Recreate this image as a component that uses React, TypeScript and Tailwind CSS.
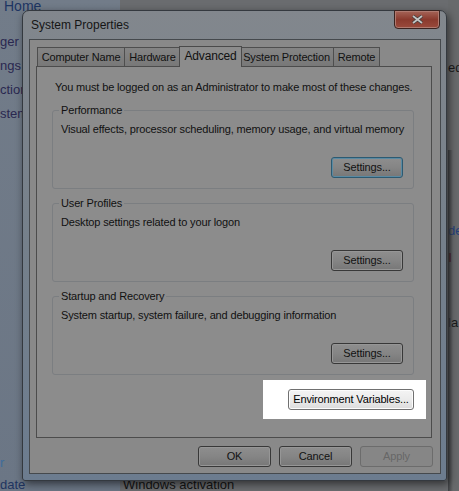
const tabs = [
  { label: "Computer Name", w: "w-[88px]" },
  { label: "Hardware", w: "w-[57px]" },
  { label: "Advanced", w: "w-[63px]", active: true },
  { label: "System Protection", w: "w-[95px]" },
  { label: "Remote", w: "w-[47px]" },
];

const groups = [
  {
    title: "Performance",
    text: "Visual effects, processor scheduling, memory usage, and virtual memory",
    focused: true,
  },
  { title: "User Profiles", text: "Desktop settings related to your logon" },
  {
    title: "Startup and Recovery",
    text: "System startup, system failure, and debugging information",
  },
];

function DimButton({
  children,
  w = "w-[72px]",
  focused = false,
  disabled = false,
}: {
  children: React.ReactNode;
  w?: string;
  focused?: boolean;
  disabled?: boolean;
}) {
  if (disabled) {
    return (
      <div
        className={`${w} flex h-[21px] items-center justify-center rounded-[3px] border border-[#6c6c6c] bg-[#868686] text-[#676767]`}
      >
        {children}
      </div>
    );
  }
  return (
    <div
      className={`${w} flex h-[21px] items-center justify-center rounded-[3px] border bg-gradient-to-b from-[#8e8e8e] via-[#858585] to-[#777777] text-[#121212] ${
        focused
          ? "border-[#2c5a72] shadow-[inset_0_0_0_1px_#5a8aa2]"
          : "border-[#383838] shadow-[inset_0_0_0_1px_#969696]"
      }`}
    >
      {children}
    </div>
  );
}

export default function App() {
  return (
    <div className="relative h-[491px] w-[459px] overflow-hidden whitespace-nowrap bg-[#6b6d70] font-['Liberation_Sans',Arial,sans-serif] text-[11px] leading-[15px] tracking-[-0.15px]">
      {/* control panel behind the dialog */}
      <div className="flex h-full">
        <aside className="flex w-[120px] flex-col bg-gradient-to-b from-[#727c89] to-[#6b7685] tracking-normal">
          <div className="-mt-[2px] pl-[4px] text-[14px] leading-[17px] text-[#1d3563]">Home</div>
          <div className="mt-[19px] flex flex-col gap-[9px] text-[13px] text-[#2a2850]">
            <span>ger</span>
            <span>ngs</span>
            <span>ction</span>
            <span>stem</span>
          </div>
          <div className="mt-auto flex flex-col gap-[7px] text-[13px]">
            <span className="text-[#3d6c9c]">r</span>
            <span className="-mb-[1px] text-[#1f3460]">date</span>
          </div>
        </aside>
        <main className="flex flex-1 flex-col bg-[#6a6c6f] tracking-normal">
          <div className="-mb-[1px] mt-auto pl-[3px] text-[13px] text-[#141414]">Windows activation</div>
        </main>
      </div>
      <div className="absolute left-[448px] top-0 flex h-full w-[11px] flex-col bg-[#686a6c] text-[13px] tracking-normal">
        <div className="absolute left-0 top-[150px] h-full w-[5px] bg-gradient-to-r from-[#3f4144] to-transparent" />
        <span className="mt-[60px] text-[#1a1a1a]">ed</span>
        <span className="mt-[148px] text-[#23407a]">de</span>
        <span className="mt-[12px] font-bold text-[#5a1010]">I</span>
        <span className="mt-[50px] text-[#1a1a1a]">la</span>
      </div>

      {/* System Properties window */}
      <div className="absolute left-[22px] top-[10px] flex h-[471px] w-[425px] flex-col rounded-b-[3px] rounded-t-[7px] border border-[#34393f] bg-gradient-to-b from-[#82878d] via-[#75808b] to-[#6c7c8f] pb-[6px] pl-[6px] pr-[5px] shadow-[2px_3px_8px_rgba(0,0,0,0.55)]">
        <div className="flex h-[28px] items-start justify-between">
          <span className="pl-[2px] pt-[7px] text-[12px] tracking-normal text-[#151515]">System Properties</span>
          <div className="-mt-[1px] mr-[1px] flex h-[19px] w-[46px] items-center justify-center rounded-b-[4px] border border-[#3a2320] bg-gradient-to-b from-[#a56458] via-[#8a3a2e] to-[#9a4a3c] shadow-[inset_0_0_0_1px_#b07a70]">
            <svg width="11" height="9" viewBox="0 0 11 9">
              <path d="M1 1 L10 8 M10 1 L1 8" stroke="#3a3a3a" strokeWidth="3.2" />
              <path d="M1 1 L10 8 M10 1 L1 8" stroke="#c4c4c4" strokeWidth="1.8" />
            </svg>
          </div>
        </div>

        <div className="flex flex-1 flex-col border border-[#45494d] bg-[#898989]">
          <div className="ml-[6px] mt-[6px] flex h-[20px] items-end pl-[2px]">
            {tabs.map((t) =>
              t.active ? (
                <div
                  key={t.label}
                  className={`${t.w} relative z-10 -mx-[2px] -mb-[1px] flex h-[21px] items-start justify-center border border-b-0 border-[#4a4a4a] bg-[#8c8c8c] pt-[2px] text-[12px] text-[#111]`}
                >
                  {t.label}
                </div>
              ) : (
                <div
                  key={t.label}
                  className={`${t.w} -ml-[1px] flex h-[19px] items-center justify-center border border-b-0 border-[#4e4e4e] bg-gradient-to-b from-[#848484] to-[#787878] text-[#111]`}
                >
                  {t.label}
                </div>
              )
            )}
          </div>

          <div className="ml-[6px] flex h-[372px] w-[396px] flex-col border border-[#4c4c4c] bg-[#8c8c8c] text-[#111]">
            <p className="ml-[18px] mt-[13px]">
              You must be logged on as an Administrator to make most of these changes.
            </p>
            {groups.map((g, i) => (
              <fieldset
                key={g.title}
                className={`${i === 0 ? "mt-[8px]" : "mt-[7px]"} ml-[15px] w-[362px] rounded-[3px] border border-[#7b7e81]`}
              >
                <legend className="ml-[6px] px-[2px]">{g.title}</legend>
                <div className="flex h-[70px] flex-col pb-[10px]">
                  <p className="ml-[8px] mt-[4px]">{g.text}</p>
                  <div className="mr-[10px] mt-auto self-end">
                    <DimButton focused={g.focused}>Settings...</DimButton>
                  </div>
                </div>
              </fieldset>
            ))}
            <div className="mr-[5px] mt-[5px] self-end bg-white pb-[9px] pl-[25px] pr-[12px] pt-[9px]">
              <div className="flex h-[21px] w-[126px] items-center justify-center rounded-[3px] border border-[#707070] bg-gradient-to-b from-[#f4f4f4] via-[#ebebeb] to-[#dcdcdc] text-black shadow-[inset_0_0_0_1px_#fcfcfc]">
                Environment Variables...
              </div>
            </div>
          </div>

          <div className="mt-[8px] flex justify-end gap-[8px] pr-[7px]">
            <DimButton w="w-[73px]">OK</DimButton>
            <DimButton w="w-[73px]">Cancel</DimButton>
            <DimButton w="w-[73px]" disabled>
              Apply
            </DimButton>
          </div>
        </div>
      </div>
    </div>
  );
}
